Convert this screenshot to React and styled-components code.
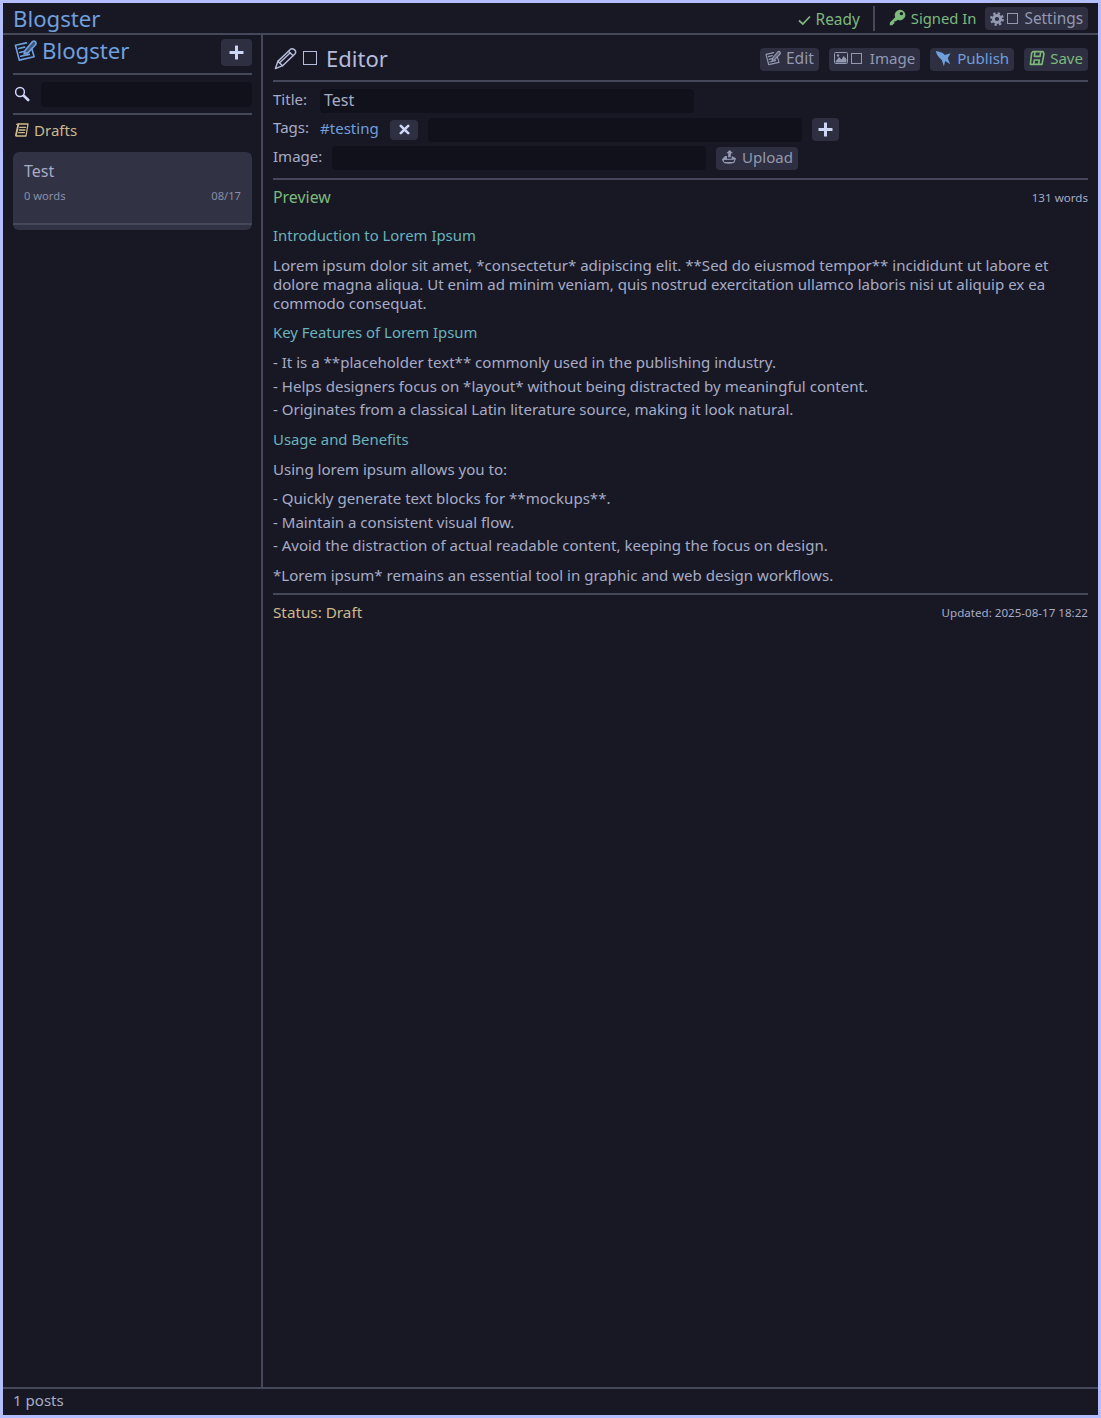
import React from 'react';
import styled, { createGlobalStyle } from 'styled-components';

const GlobalStyle = createGlobalStyle`
  html, body { margin: 0; padding: 0; background: #181825; }
  * { box-sizing: border-box; }
`;

const Frame = styled.div`
  width: 1101px;
  height: 1418px;
  border: 3px solid #b4befe;
  background: #181825;
  color: #a6acc6;
  font-family: "Noto Sans", "Open Sans", sans-serif;
  font-size: 15.05px;
  display: flex;
  flex-direction: column;
  overflow: hidden;
`;

const TopBar = styled.header`
  height: 32px;
  flex: none;
  display: flex;
  align-items: center;
  justify-content: space-between;
  padding: 1px 10px 0 10px;
  border-bottom: 2px solid #45475a;
`;

const Brand = styled.div`
  color: #6f9fdc;
  font-size: 22.2px;
  line-height: 30px;
`;

const StatusGroup = styled.div`
  display: flex;
  align-items: center;
`;

const StatusItem = styled.span`
  display: inline-flex;
  align-items: center;
  gap: 5px;
  color: #7db87c;
  font-size: ${(p) => p.$fs || 15}px;
  padding-top: ${(p) => p.$pt || 0}px;
  padding-bottom: ${(p) => p.$pb || 0}px;
`;

const Divider = styled.span`
  width: 2px;
  height: 25px;
  margin: 0 14px 0 13px;
  background: #45475a;
`;

const Body = styled.div`
  flex: 1;
  display: flex;
  min-height: 0;
`;

const Sidebar = styled.aside`
  width: 260px;
  flex: none;
  padding: 3px 9px 0 10px;
  border-right: 2px solid #45475a;
`;

const SideHead = styled.div`
  display: flex;
  align-items: center;
  justify-content: space-between;
  border-bottom: 2px solid #45475a;
  padding-bottom: 7px;
`;

const SideTitle = styled.div`
  display: flex;
  align-items: center;
  gap: 5px;
  padding-left: 1px;
  color: #6f9fdc;
  font-size: 22.2px;
  margin-top: -3px;
`;

const IconButton = styled.button`
  border: 0;
  border-radius: 4px;
  padding: 0;
  display: flex;
  align-items: center;
  justify-content: center;
  background: #2e2f41;
  color: #cdd6f4;
  width: ${(p) => p.$w}px;
  height: ${(p) => p.$h}px;
  flex: none;
`;

const SearchRow = styled.div`
  height: 40px;
  display: flex;
  align-items: center;
  gap: 11px;
  padding-left: 1px;
  border-bottom: 2px solid #45475a;
`;

const Field = styled.div`
  background: #11111b;
  border-radius: 4px;
  height: ${(p) => p.$h || 24}px;
  line-height: ${(p) => (p.$h || 24) - 1}px;
  padding-left: 4px;
  font-size: 16px;
  ${(p) => (p.$w ? `width: ${p.$w}px; flex: none;` : 'flex: 1;')}
`;

const Section = styled.div`
  height: 37px;
  display: flex;
  align-items: center;
  gap: 4px;
  padding: 0 0 7px 1px;
  color: #cdb98a;
`;

const PostCard = styled.div`
  height: 78px;
  border-radius: 6px;
  background: #313244;
  padding: 9px 11px 0;
  position: relative;
`;

const PostTitle = styled.div`
  font-size: 16px;
  line-height: 20px;
`;

const PostMeta = styled.div`
  display: flex;
  justify-content: space-between;
  font-size: 11.2px;
  color: #8a8fa8;
  margin-top: 6px;
  line-height: 18px;
`;

const CardRule = styled.div`
  position: absolute;
  left: 0;
  right: 0;
  bottom: 5px;
  height: 2px;
  background: #45475a;
`;

const Main = styled.main`
  flex: 1;
  min-width: 0;
  padding: 0 10px;
`;

const EditorHead = styled.div`
  height: 47px;
  padding-top: 3px;
  display: flex;
  align-items: center;
  justify-content: space-between;
  border-bottom: 2px solid #45475a;
`;

const EditorTitle = styled.div`
  display: flex;
  align-items: center;
  gap: 6px;
  font-size: 22px;
  color: #b5bcdb;
  padding: 0 0 2px 1px;
`;

const EditorName = styled.span`
  margin-left: 3px;
`;

const Actions = styled.div`
  display: flex;
  align-items: center;
  gap: 10px;
`;

const ActionButton = styled.div`
  height: 23px;
  border-radius: 4px;
  background: #2e2f41;
  padding: 0 5px ${(p) => p.$pb ?? 2}px;
  display: inline-flex;
  align-items: center;
  gap: 5px;
  color: ${(p) => p.$color || '#9499b2'};
  margin-left: ${(p) => p.$ml || 0}px;
  font-size: ${(p) => p.$fs || 15.05}px;
  flex: none;
`;

const IconPair = styled.span`
  display: inline-flex;
  align-items: center;
  gap: 3px;
  margin-right: ${(p) => p.$mr || 1}px;
`;

const Meta = styled.div`
  display: flex;
  flex-direction: column;
  border-bottom: 2px solid #45475a;
  padding: 7px 0 8px;
  gap: 4.5px;
`;

const MetaRow = styled.div`
  display: flex;
  align-items: center;
  height: 24px;
  gap: 10px;
`;

const MetaLabel = styled.span`
  width: ${(p) => p.$w}px;
  flex: none;
  white-space: nowrap;
  padding-bottom: 5px;
`;

const Tag = styled.span`
  color: #6f9fdc;
  width: 60px;
  flex: none;
  white-space: nowrap;
  padding-bottom: 3px;
`;

const InfoRow = styled.div`
  display: flex;
  align-items: center;
  justify-content: space-between;
  height: ${(p) => p.$h}px;
  color: ${(p) => p.$color};
  font-size: ${(p) => p.$fs}px;
`;

const Small = styled.span`
  font-size: 11.6px;
  color: #a6acc6;
`;

const Preview = styled.div`
  display: flex;
  flex-direction: column;
  gap: 10.75px;
  padding-top: 7px;
  padding-bottom: 8px;
  border-bottom: 2px solid #45475a;
  line-height: 19px;
`;

const Heading = styled.div`
  color: #69b3bc;
  margin-top: ${(p) => p.$mt || 0}px;
  font-size: 14.9px;
`;

const List = styled.div`
  display: flex;
  flex-direction: column;
  gap: 4.5px;
`;

const BottomBar = styled.footer`
  height: 28px;
  flex: none;
  padding: 0 0 4px 10px;
  display: flex;
  align-items: center;
  border-top: 2px solid #45475a;
`;

const Glyph = ({ size = 16, children, sw = 1.8 }) => (
  <svg
    width={size}
    height={size}
    viewBox="0 0 24 24"
    fill="none"
    stroke="currentColor"
    strokeWidth={sw}
    strokeLinejoin="round"
    strokeLinecap="round"
    style={{ flex: 'none' }}
  >
    {children}
  </svg>
);

const Solid = ({ size = 16, children }) => (
  <svg width={size} height={size} viewBox="0 0 24 24" fill="currentColor" style={{ flex: 'none' }}>
    {children}
  </svg>
);

const Box = ({ size = 12 }) => (
  <svg width={size} height={size} viewBox="0 0 12 12" fill="none" stroke="currentColor" strokeWidth={12 / size} style={{ flex: 'none' }}>
    <rect x={6 / size} y={6 / size} width={12 - 12 / size} height={12 - 12 / size} />
  </svg>
);

const Memo = ({ size }) => (
  <Glyph size={size} sw={1.7}>
    <path d="M13 4 L1.5 6.5 L5.5 22 L21 18.5 L18.5 10" />
    <path d="M5 10 L11 8.5 M6 14 L10 13 M7 18 L16 16" />
    <path d="M11.5 12 L19.5 2.5 Q21 1.5 22.5 3 Q23.5 4.5 22.5 6 L14.5 14.5 L10.5 15.5 Z" fill="currentColor" fillOpacity=".45" />
  </Glyph>
);

const Plus = () => (
  <svg width="15" height="15" viewBox="0 0 15 15" fill="currentColor">
    <rect x="6" y="0.5" width="3" height="14" rx="0.6" />
    <rect x="0.5" y="6" width="14" height="3" rx="0.6" />
  </svg>
);

const Cross = () => (
  <svg width="11" height="11" viewBox="0 0 11 11" stroke="currentColor" strokeWidth="2.6" strokeLinecap="round">
    <path d="M1.8 1.8 L9.2 9.2 M9.2 1.8 L1.8 9.2" />
  </svg>
);

const Search = () => (
  <svg width="16" height="16" viewBox="0 0 16 16" fill="none" stroke="#cdd6f4" style={{ flex: 'none' }}>
    <circle cx="6" cy="6" r="4.4" strokeWidth="1.5" />
    <path d="M9.8 9.8 L14.2 14" strokeWidth="2.6" strokeLinecap="round" />
  </svg>
);

const Ledger = () => (
  <Glyph size={16} sw={1.9}>
    <path d="M7 3 H21 L18 21 H3 Z" />
    <path d="M4 3.5 Q6 3 7 3 M2.5 20 L6 4" />
    <path d="M8.5 8 H17.5 M8 12 H16.5 M7 16 H15.5" />
  </Glyph>
);

const Check = () => (
  <svg width="13" height="12" viewBox="0 0 13 12" fill="none" stroke="currentColor" strokeWidth="1.7">
    <path d="M1 6.5 L4.8 10 L12 2.5" />
  </svg>
);

const Key = () => (
  <Solid size={17}>
    <path fillRule="evenodd" d="M15.5 1 a7.5 7.5 0 1 1 -3.3 14.2 L10 17.4 H7.6 V20 L4.6 23 H1.2 V19.2 L8.8 11.6 A7.5 7.5 0 0 1 15.5 1 Z M17.5 4.2 a2.3 2.3 0 1 0 .01 0 Z" />
  </Solid>
);

const Gear = () => (
  <svg width="14" height="14" viewBox="0 0 14 14" style={{ flex: 'none' }}>
    <circle cx="7" cy="7" r="3.6" fill="none" stroke="currentColor" strokeWidth="3" />
    <circle cx="7" cy="7" r="5.8" fill="none" stroke="currentColor" strokeWidth="2.2" strokeDasharray="2.3 2.25" />
  </svg>
);

const Pencil = () => (
  <Glyph size={23} sw={1.5}>
    <path d="M1.5 22.5 L4 15 L17 2.5 Q19 1 21.5 3 Q23.5 5 22 7 L9 19.5 Z" />
    <path d="M4 15 L9 19.5 M15 4.5 L20 9 M6.5 16 L17 6" />
  </Glyph>
);

const Picture = () => (
  <svg width="14" height="12" viewBox="0 0 14 12" style={{ flex: 'none' }}>
    <rect x="0.5" y="0.5" width="13" height="11" rx="1" fill="none" stroke="currentColor" />
    <path d="M1.5 9.5 L5 5 L7.5 7.5 L9.5 4 L12.5 7 V10.5 H1.5 Z" fill="currentColor" />
    <circle cx="4" cy="3.5" r="1.2" fill="currentColor" />
  </svg>
);

const Rocket = () => (
  <Solid size={17}>
    <path d="M1 1.5 Q9 2 14 7 L22 4.5 L18 11.5 L21.5 20 L14.5 15.5 L12.5 23 L9.5 14 Q3 9 1 1.5 Z" />
  </Solid>
);

const Floppy = () => (
  <Glyph size={16} sw={2.4}>
    <path d="M6 2.5 H21 L22.5 6 L19.5 21.5 H2 L4 4.5 Z" />
    <path d="M9 3 L8 9.5 H16.5 L17.5 3 M7 21 L8 15 H15.5 L14.5 21" />
  </Glyph>
);

const Tray = () => (
  <Solid size={16}>
    <path d="M13 1.5 L18 6.5 H15 L14.5 12.5 H10.5 L11 6.5 H8 Z" />
    <path fillRule="evenodd" d="M1 16 L6 10.5 H9 L8.8 14.5 H16 L16.2 10.5 L22.5 14 L20 20.5 Q14 23 5 21.5 Z M4 16.5 L5 19.5 H18.5 L20 16 Z" />
  </Solid>
);

export default function App() {
  return (
    <>
      <GlobalStyle />
      <Frame>
        <TopBar>
          <Brand>Blogster</Brand>
          <StatusGroup>
            <StatusItem $fs={15.4} $pt={2}><Check /> Ready</StatusItem>
            <Divider />
            <StatusItem $fs={14.8} $pb={2}><Key /> Signed In</StatusItem>
            <ActionButton $ml={9} $fs={15.4} $pb={0}>
              <IconPair><Gear /><Box size={11} /></IconPair>
              Settings
            </ActionButton>
          </StatusGroup>
        </TopBar>
        <Body>
          <Sidebar>
            <SideHead>
              <SideTitle><Memo size={23} /> Blogster</SideTitle>
              <IconButton $w={31} $h={27}><Plus /></IconButton>
            </SideHead>
            <SearchRow>
              <Search />
              <Field $h={25} />
            </SearchRow>
            <Section><Ledger /> Drafts</Section>
            <PostCard>
              <PostTitle>Test</PostTitle>
              <PostMeta><span>0 words</span><span>08/17</span></PostMeta>
              <CardRule />
            </PostCard>
          </Sidebar>
          <Main>
            <EditorHead>
              <EditorTitle>
                <Pencil /><Box size={14} />
                <EditorName>Editor</EditorName>
              </EditorTitle>
              <Actions>
                <ActionButton $fs={15.6}><Memo size={16} /> Edit</ActionButton>
                <ActionButton><IconPair $mr={3}><Picture /><Box size={11} /></IconPair> Image</ActionButton>
                <ActionButton $color="#6f9fdc"><Rocket /> Publish</ActionButton>
                <ActionButton $color="#7db87c"><Floppy /> Save</ActionButton>
              </Actions>
            </EditorHead>
            <Meta>
              <MetaRow>
                <MetaLabel $w={37}>Title:</MetaLabel>
                <Field $w={374}>Test</Field>
              </MetaRow>
              <MetaRow>
                <MetaLabel $w={37}>Tags:</MetaLabel>
                <Tag>#testing</Tag>
                <IconButton $w={28} $h={20}><Cross /></IconButton>
                <Field $w={374} />
                <IconButton $w={27} $h={23}><Plus /></IconButton>
              </MetaRow>
              <MetaRow>
                <MetaLabel $w={49}>Image:</MetaLabel>
                <Field $w={374} />
                <ActionButton><Tray /> Upload</ActionButton>
              </MetaRow>
            </Meta>
            <Preview>
              <InfoRow $h={21} $fs={15.9} $color="#7db87c">
                <span>Preview</span>
                <Small>131 words</Small>
              </InfoRow>
              <Heading $mt={7}>Introduction to Lorem Ipsum</Heading>
              <div>
                Lorem ipsum dolor sit amet, *consectetur* adipiscing elit. **Sed do eiusmod tempor** incididunt ut labore et dolore magna aliqua. Ut enim ad minim veniam, quis nostrud exercitation ullamco laboris nisi ut aliquip ex ea commodo consequat.
              </div>
              <Heading>Key Features of Lorem Ipsum</Heading>
              <List>
                <div>- It is a **placeholder text** commonly used in the publishing industry.</div>
                <div>- Helps designers focus on *layout* without being distracted by meaningful content.</div>
                <div>- Originates from a classical Latin literature source, making it look natural.</div>
              </List>
              <Heading>Usage and Benefits</Heading>
              <div>Using lorem ipsum allows you to:</div>
              <List>
                <div>- Quickly generate text blocks for **mockups**.</div>
                <div>- Maintain a consistent visual flow.</div>
                <div>- Avoid the distraction of actual readable content, keeping the focus on design.</div>
              </List>
              <div>*Lorem ipsum* remains an essential tool in graphic and web design workflows.</div>
            </Preview>
            <InfoRow $h={34} $fs={15.25} $color="#cdb98a">
              <span>Status: Draft</span>
              <Small>Updated: 2025-08-17 18:22</Small>
            </InfoRow>
          </Main>
        </Body>
        <BottomBar>1 posts</BottomBar>
      </Frame>
    </>
  );
}
